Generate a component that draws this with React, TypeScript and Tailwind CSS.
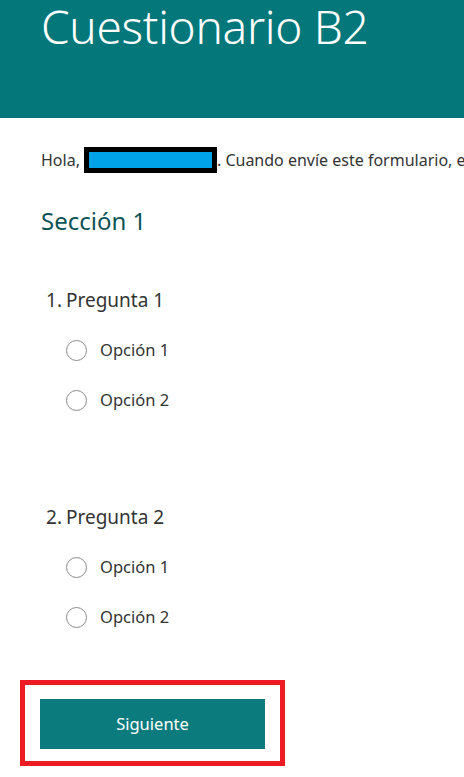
import { ReactNode } from 'react'

function Option({ label }: { label: string }) {
  return (
    <label className="flex items-center h-[50px] pl-[25px]">
      <span className="shrink-0 w-[21px] h-[21px] rounded-full border border-[#8a8a8a] bg-white"></span>
      <span className="ml-[13px] text-[16.5px] text-[#333333]">{label}</span>
    </label>
  )
}

function Question({ num, title, children }: { num: number; title: string; children: ReactNode }) {
  return (
    <div>
      <div className="flex items-baseline h-[36px] pl-[5px] text-[19px] text-[#333333]">
        <span className="mr-[4px]">{num}.</span>
        <span>{title}</span>
      </div>
      <div className="mt-[3px]">{children}</div>
    </div>
  )
}

function App() {
  return (
    <div className="w-[464px] h-[777px] overflow-hidden bg-white" style={{ fontFamily: '"Noto Sans", "Open Sans", sans-serif' }}>
      <header className="h-[118px] bg-[#03777a] pl-[41px]">
        <h1 className="text-white text-[46px] font-light leading-[52px] tracking-[-0.3px]">Cuestionario B2</h1>
      </header>

      <main className="pl-[41px]">
        <p className="mt-[29px] flex items-center whitespace-nowrap overflow-hidden text-[16px] text-[#333333] h-[26px]">
          Hola,
          <span className="shrink-0 ml-[4px] inline-block w-[133px] h-[26px] border-[5px] border-black bg-[#00a2e8]"></span>
          . Cuando envíe este formulario, el propietario verá su nombre.
        </p>

        <h2 className="mt-[33px] text-[24px] text-[#0b5356] leading-[30px]">Sección 1</h2>

        <div className="mt-[50px]">
          <Question num={1} title="Pregunta 1">
            <Option label="Opción 1" />
            <Option label="Opción 2" />
          </Question>
        </div>

        <div className="mt-[78px]">
          <Question num={2} title="Pregunta 2">
            <Option label="Opción 1" />
            <Option label="Opción 2" />
          </Question>
        </div>
      </main>

      <div className="ml-[20px] mt-[38px] w-[265px] h-[86px] border-[5px] border-[#ed1c24] pt-[14px] pl-[15px]">
        <button className="w-[225px] h-[50px] bg-[#0b7b7e] text-white text-[16.5px]">Siguiente</button>
      </div>
    </div>
  )
}

export default App
